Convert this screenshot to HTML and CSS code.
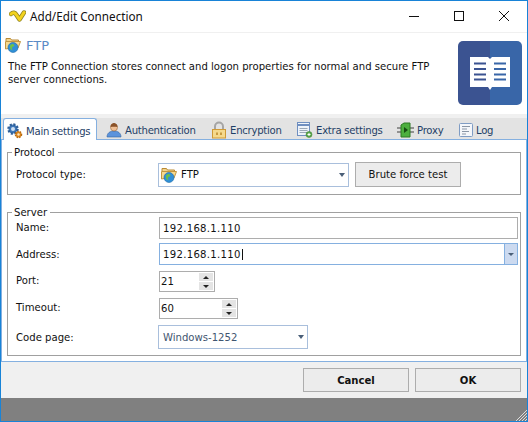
FILE: index.html
```html
<!DOCTYPE html>
<html lang="en">
<head>
  <meta charset="UTF-8">
  <title>Add/Edit Connection</title>
  <link rel="stylesheet" href="styles.css">
</head>
<body>
  <svg class="defs" width="0" height="0">
    <defs>
      <symbol id="ftp" viewBox="0 0 16 16">
        <path d="M1 4V1.500h4.500l1 1.500h7v2" fill="#f3d48c" stroke="#b98a35"/>
        <path d="M.5 12V4.500h15L13 11H6z" fill="#f6d98f" stroke="#c39640"/>
        <circle cx="8" cy="10.500" r="5" fill="#2f8fd8" stroke="#1c6aa6" stroke-width=".6"/>
        <path d="M5 8.500c2-2 3-1.500 4-1 1 1 0 2-1.500 2.500-1 1-.5 2 0 3.500-2-.5-3-2.500-2.500-5z" fill="#6cc04a"/>
      </symbol>
    </defs>
  </svg>

  <div class="window">
    <div class="titlebar">
      <svg class="app-icon" width="17" height="12" viewBox="0 0 17 12">
        <path d="M2 4C4 2 6 2.500 7.500 5l3 4.500L15 2.500" fill="none" stroke="#8f8324" stroke-width="4.500" stroke-linecap="round" stroke-linejoin="round"/>
        <path d="M2 4C4 2 6 2.500 7.500 5l3 4.500L15 2.500" fill="none" stroke="#f2d21f" stroke-width="3" stroke-linecap="round" stroke-linejoin="round"/>
      </svg>
      <span class="title">Add/Edit Connection</span>
      <div class="win-buttons">
        <svg width="10" height="10" viewBox="0 0 10 10"><path d="M0 5.500h10" stroke="#111"/></svg>
        <svg width="10" height="10" viewBox="0 0 10 10"><rect x=".5" y=".5" width="9" height="9" fill="none" stroke="#111"/></svg>
        <svg width="10" height="10" viewBox="0 0 10 10"><path d="M0 0l10 10M10 0L0 10" stroke="#111"/></svg>
      </div>
    </div>

    <div class="header">
      <div class="header-text">
        <div class="header-title">
          <svg width="16" height="16"><use href="#ftp"/></svg>
          <span>FTP</span>
        </div>
        <p>The FTP Connection stores connect and logon properties for normal and secure FTP server connections.</p>
      </div>
      <div class="book-tile">
        <svg width="40" height="33" viewBox="0 0 40 33">
          <path d="M0 0h18l2 2 2-2h18v30H22l-2 3-2-3H0z" fill="#fff"/>
          <path d="M4 6.500h12M4 12h12M4 17.500h12M4 22.500h12" stroke="#3b5391" stroke-width="2"/>
          <path d="M24 6.500h12M24 12h12M24 17.500h12M24 22.500h12" stroke="#3966a8" stroke-width="2"/>
        </svg>
      </div>
    </div>

    <div class="tabs">
      <div class="tab active">
        <svg width="16" height="16" viewBox="0 0 16 16">
          <circle cx="6" cy="6" r="4.500" fill="#3f78b8" stroke="#2f5f98" stroke-width="2.500" stroke-dasharray="2 1.500"/>
          <circle cx="6" cy="6" r="2" fill="#cfe0f2"/>
          <circle cx="11.500" cy="11.500" r="3" fill="#e08a1e" stroke="#b86a12" stroke-width="1.500" stroke-dasharray="1.500 1"/>
          <circle cx="11.500" cy="11.500" r="1.200" fill="#fbe3bd"/>
        </svg>
        Main settings
      </div>
      <div class="tab tab-auth">
        <svg width="16" height="16" viewBox="0 0 16 16"><path d="M1 15c0-4 3-6 7-6s7 2 7 6z" fill="#5b93dc" stroke="#38659f" stroke-width=".6"/><circle cx="8" cy="5.500" r="3.500" fill="#efbf95" stroke="#9b6a3c" stroke-width=".6"/><path d="M4.500 5c0-3 2-4 3.500-4s3.500 1 3.500 4c-2-.5-5-.5-7 0z" fill="#8a5228"/></svg>
        Authentication
      </div>
      <div class="tab tab-enc">
        <svg width="16" height="18" viewBox="0 0 16 18"><path d="M4 9V5.500a4 4 0 0 1 8 0V9" fill="none" stroke="#a5a5a5" stroke-width="2"/><rect x="1.500" y="8.500" width="13" height="8.500" fill="#f5d98c" stroke="#d09a35"/><path d="M5 11.500h2v2.500H5zM9 11.500h2v2.500H9z" fill="#c89a3f"/></svg>
        Encryption
      </div>
      <div class="tab tab-extra">
        <svg width="16" height="16" viewBox="0 0 16 16"><rect x=".5" y=".5" width="12" height="13" fill="#eef3fa" stroke="#6f8fc0"/><path d="M1 3h11" stroke="#6f8fc0" stroke-width="2"/><path d="M2.500 6.500h8M2.500 8.500h8M2.500 10.500h8" stroke="#9aa8b8"/><circle cx="12" cy="12.500" r="3" fill="#5aa84a" stroke="#3c7d30" stroke-width=".5"/><path d="M10.500 12.500h3M12 11v3" stroke="#fff"/></svg>
        Extra settings
      </div>
      <div class="tab tab-proxy">
        <svg width="17" height="16" viewBox="0 0 17 16"><path d="M0 6h4M0 10h4M13 6h4M13 10h4" stroke="#777" stroke-width="1.500"/><path d="M4 3l3-2h6v14H4z" fill="#4caf3e" stroke="#2c7a22"/><path d="M7 5l4 3-4 3z" fill="#174d12"/></svg>
        Proxy
      </div>
      <div class="tab">
        <svg width="14" height="14" viewBox="0 0 14 14"><rect x=".5" y=".5" width="13" height="13" rx="1" fill="#f4f6fa" stroke="#7f9cc4"/><path d="M3 3.500h8M3 6h5M3 8.500h7M3 11h4" stroke="#8a96a6"/></svg>
        Log
      </div>
    </div>

    <div class="page">
      <fieldset class="group group-protocol">
        <legend>Protocol</legend>
        <div class="row">
          <label>Protocol type:</label>
          <div class="combo combo-protocol">
            <svg width="16" height="16"><use href="#ftp"/></svg>
            <span>FTP</span>
            <span class="arrow"></span>
          </div>
          <button class="btn btn-brute">Brute force test</button>
        </div>
      </fieldset>

      <fieldset class="group group-server">
        <legend>Server</legend>
        <div class="row row-name">
          <label>Name:</label>
          <div class="input">192.168.1.110</div>
        </div>
        <div class="row row-address">
          <label>Address:</label>
          <div class="input input-address"><span class="caret-text">192.168.1.110</span><span class="drop"><span class="arrow"></span></span></div>
        </div>
        <div class="row row-port">
          <label>Port:</label>
          <div class="spin spin-port">21<span class="spin-btns"><span class="up"></span><span class="down"></span></span></div>
        </div>
        <div class="row row-timeout">
          <label>Timeout:</label>
          <div class="spin spin-timeout">60<span class="spin-btns"><span class="up"></span><span class="down"></span></span></div>
        </div>
        <div class="row row-code">
          <label>Code page:</label>
          <div class="combo combo-code"><span>Windows-1252</span><span class="arrow"></span></div>
        </div>
      </fieldset>
    </div>

    <div class="footer">
      <button class="btn btn-footer">Cancel</button>
      <button class="btn btn-footer">OK</button>
    </div>

    <div class="statusbar">
      <svg class="grip" width="12" height="12" viewBox="0 0 12 12"><path d="M12 1L1 12M12 4L4 12M12 7L7 12M12 10L10 12" stroke="#ddd"/></svg>
    </div>
  </div>
</body>
</html>
```

FILE: styles.css
```css
* {
  box-sizing: border-box;
}
html, body {
  margin: 0;
  padding: 0;
}
body {
  width: 528px;
  height: 422px;
  overflow: hidden;
  font-family: "DejaVu Sans", sans-serif;
  font-size: 10.1px;
  color: #111;
}
.defs {
  display: block;
  height: 0;
}
.window {
  width: 528px;
  height: 422px;
  display: flex;
  flex-direction: column;
  border: 1px solid #1883d7;
  background: #f0f0f0;
}
.titlebar {
  height: 31px;
  background: #fff;
  display: flex;
  align-items: center;
  padding: 0 0 2px 8px;
  flex: none;
}
.app-icon {
  margin-right: 4px;
}
.title {
  font-family: "Noto Sans", sans-serif;
  font-size: 11.7px;
}
.win-buttons {
  margin-left: auto;
  display: flex;
  gap: 35px;
  padding-right: 18px;
}
.header {
  height: 82px;
  flex: none;
  background: #fff;
  border-top: 1px solid #f0f0f0;
  display: flex;
  padding: 4px 5px 0 4px;
}
.header-text {
  flex: 1;
}
.header-title {
  display: flex;
  align-items: center;
  gap: 5px;
  height: 16px;
  color: #5a8ac6;
  font-size: 13px;
}
.header-text p {
  margin: 7px 0 0 3px;
  width: 440px;
  line-height: 13px;
}
.book-tile {
  width: 64px;
  height: 64px;
  margin-top: 4px;
  border-radius: 5px;
  background: linear-gradient(90deg, #3b5391 50%, #3966a8 50%);
  display: flex;
  align-items: center;
  justify-content: center;
}
.tabs {
  height: 22px;
  flex: none;
  margin-top: 4px;
  display: flex;
  padding-left: 2px;
  background: #e3e3e3;
  border-bottom: 1px solid #85b0e0;
}
.tab {
  display: flex;
  flex: none;
  align-items: center;
  gap: 3px;
  height: 21px;
  padding-top: 3px;
  letter-spacing: -.25px;
  color: #1f3f66;
}
.tab.active {
  width: 94px;
  height: 22px;
  margin-right: 9px;
  padding-left: 3px;
  background: #fff;
  border: 1px solid #85b0e0;
  border-bottom: none;
  border-radius: 3px 3px 0 0;
}
.tab-auth {
  width: 105px;
}
.tab-enc {
  width: 86px;
}
.tab-extra {
  width: 100px;
}
.tab-proxy {
  width: 62px;
}
.page {
  background: #fff;
  height: 222px;
  flex: none;
  padding: 6px 5px 0;
  border: 1px solid #85b0e0;
  border-top: none;
}
.group {
  margin: 0;
  padding: 0 0 0 8px;
  border: 1px solid #a0a0a0;
  min-width: 0;
}
.group legend {
  margin-left: -4px;
  padding: 0 3px 0 2px;
  line-height: 13px;
}
.group-protocol {
  height: 49px;
}
.group-protocol .row {
  margin-top: 3px;
}
.row {
  display: flex;
  align-items: center;
}
.row label {
  width: 143px;
  flex: none;
}
.row-name label,
.row-port label,
.row-timeout label {
  margin-top: -2px;
}
.combo {
  border: 1px solid #a9bfdc;
  background: #fff;
  display: flex;
  align-items: center;
  height: 24px;
  margin-left: -1px;
  color: #3f5570;
}
.combo-protocol {
  width: 191px;
  padding-left: 2px;
  gap: 4px;
  color: #111;
}
.arrow {
  display: block;
  width: 0;
  height: 0;
  border-left: 3.5px solid transparent;
  border-right: 3.5px solid transparent;
  border-top: 4px solid #4a5f78;
  margin-left: auto;
  margin-right: 3px;
}
.btn {
  font: inherit;
  color: #111;
  background: #ececec;
  border: 1px solid #adadad;
  padding: 0;
}
.btn-brute {
  width: 106px;
  height: 25px;
  margin-left: 6px;
}
.group-server {
  height: 150px;
  margin-top: 11px;
}
.row-name {
  margin-top: -2px;
}
.row-address {
  margin-top: 4px;
}
.row-port,
.row-timeout,
.row-code {
  margin-top: 6px;
}
.input {
  width: 359px;
  height: 22px;
  border: 1px solid #adadad;
  background: #fff;
  display: flex;
  align-items: center;
  padding-left: 3px;
  letter-spacing: .3px;
}
.input-address {
  border-color: #85b0e0;
}
.caret-text {
  border-right: 1px solid #111;
  padding-right: 1px;
}
.drop {
  margin-left: auto;
  width: 13px;
  height: 20px;
  background: #ccdaf0;
  border-left: 1px solid #85b0e0;
  display: flex;
  align-items: center;
}
.drop .arrow {
  margin: 0 auto;
  border-left-width: 3px;
  border-right-width: 3px;
  border-top-width: 3px;
}
.spin {
  height: 21px;
  border: 1px solid #adadad;
  padding-left: 1px;
  display: flex;
  align-items: center;
}
.spin-port {
  width: 56px;
}
.spin-timeout {
  width: 79px;
}
.spin-btns {
  margin-left: auto;
  width: 14px;
  margin-right: 1px;
  height: 17px;
  display: flex;
  flex-direction: column;
  gap: 1px;
}
.spin-btns span {
  flex: 1;
  background: #e4e4e4;
  display: flex;
  align-items: center;
  justify-content: center;
}
.spin-btns .up::after,
.spin-btns .down::after {
  content: "";
  border-left: 3px solid transparent;
  border-right: 3px solid transparent;
}
.spin-btns .up::after {
  border-bottom: 3px solid #222;
}
.spin-btns .down::after {
  border-top: 3px solid #222;
}
.combo-code {
  width: 150px;
  padding-left: 4px;
}
.footer {
  flex: 1;
  display: flex;
  justify-content: flex-end;
  align-items: center;
  gap: 6px;
  padding-right: 6px;
}
.btn-footer {
  width: 106px;
  height: 24px;
  font-weight: bold;
}
.statusbar {
  height: 23px;
  flex: none;
  background: #808080;
  position: relative;
}
.grip {
  position: absolute;
  right: 0;
  bottom: 0;
}
```
